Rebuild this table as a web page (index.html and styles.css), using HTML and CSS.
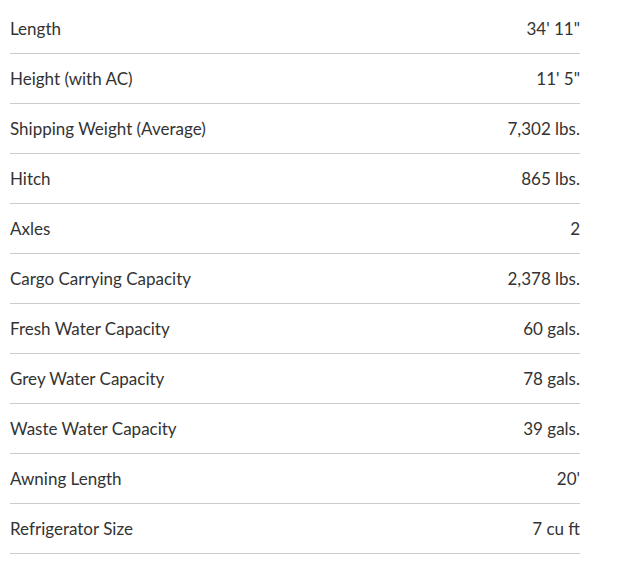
FILE: index.html
```html
<!DOCTYPE html>
<html>
<head>
<meta charset="utf-8">
<link rel="stylesheet" href="styles.css">
</head>
<body>
<div class="specs">
  <div class="row"><span class="label">Length</span><span class="value">34' 11"</span></div>
  <div class="row"><span class="label">Height (with AC)</span><span class="value">11' 5"</span></div>
  <div class="row"><span class="label">Shipping Weight (Average)</span><span class="value">7,302 lbs.</span></div>
  <div class="row"><span class="label">Hitch</span><span class="value">865 lbs.</span></div>
  <div class="row"><span class="label">Axles</span><span class="value">2</span></div>
  <div class="row"><span class="label">Cargo Carrying Capacity</span><span class="value">2,378 lbs.</span></div>
  <div class="row"><span class="label">Fresh Water Capacity</span><span class="value">60 gals.</span></div>
  <div class="row"><span class="label">Grey Water Capacity</span><span class="value">78 gals.</span></div>
  <div class="row"><span class="label">Waste Water Capacity</span><span class="value">39 gals.</span></div>
  <div class="row"><span class="label">Awning Length</span><span class="value">20'</span></div>
  <div class="row"><span class="label">Refrigerator Size</span><span class="value">7 cu ft</span></div>
</div>
</body>
</html>
```
FILE: styles.css
```css
html, body {
  margin: 0;
  padding: 0;
  background: #fff;
}
body {
  padding: 4px 40px 0 10px;
  font-family: Lato, "Open Sans", sans-serif;
  font-size: 17px;
  color: #333;
}
.specs {
  display: flex;
  flex-direction: column;
}
.row {
  display: flex;
  justify-content: space-between;
  align-items: center;
  height: 49px;
  border-bottom: 1px solid #ccc;
}
```
